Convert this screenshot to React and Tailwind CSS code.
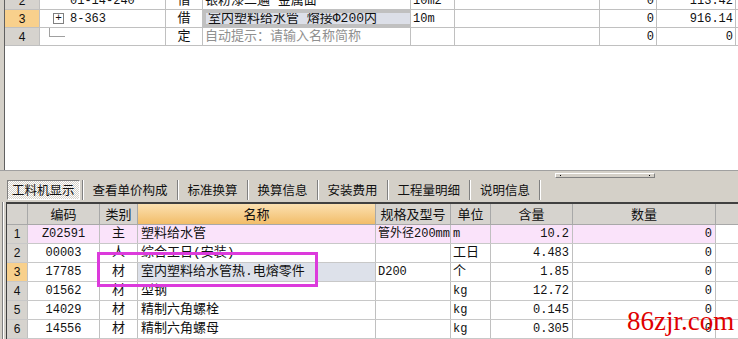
import React from "react";

const cjk = "font-['Liberation_Mono','Noto_Sans_CJK_SC',monospace]";

function Cell({ w, className = "", children }) {
    return (
        <div
            className={`shrink-0 h-full flex items-center border-r border-[#c0c0c0] overflow-hidden whitespace-nowrap ${className}`}
            style={{ width: w }}
        >
            {children}
        </div>
    );
}

const topRows = [
    { n: "2", code: "01-14-240", t: "借", name: "银粉漆二遍 金属面", unit: "10m2", a: "0", b: "113.42" },
    { n: "3", code: "8-363", t: "借", name: "室内塑料给水管 熔接Φ200内", unit: "10m", a: "0", b: "916.14", sel: true },
    { n: "4", code: "", t: "定", name: "自动提示：请输入名称简称", unit: "", a: "0", b: "0", hint: true },
];

const items = [
    { n: "1", code: "Z02591", t: "主", name: "塑料给水管", spec: "管外径200mm", unit: "m", qty: "10.2", amt: "0", pink: true },
    { n: "2", code: "00003", t: "人", name: "综合工日(安装)", spec: "", unit: "工日", qty: "4.483", amt: "0" },
    { n: "3", code: "17785", t: "材", name: "室内塑料给水管热.电熔零件", spec: "D200", unit: "个", qty: "1.85", amt: "0", sel: true },
    { n: "4", code: "01562", t: "材", name: "型钢", spec: "", unit: "kg", qty: "12.72", amt: "0" },
    { n: "5", code: "14029", t: "材", name: "精制六角螺栓", spec: "", unit: "kg", qty: "0.145", amt: "0" },
    { n: "6", code: "14556", t: "材", name: "精制六角螺母", spec: "", unit: "kg", qty: "0.305", amt: "0" },
];

const tabs = ["工料机显示", "查看单价构成", "标准换算", "换算信息", "安装费用", "工程量明细", "说明信息"];

function TopGrid() {
    return (
        <div className="h-[171px] flex bg-white border-b border-[#a0a0a0]">
            <div className="w-[4px] shrink-0 bg-[#d4d0c8]" />
            <div className="w-[1px] shrink-0 bg-[#606060]" />
            <div className="flex-1 overflow-hidden">
                <div className="-mt-[8px]">
                    {topRows.map((r) => (
                        <div key={r.n} className={`flex h-[18px] border-b border-[#c0c0c0] text-[12px] text-[#111] ${cjk}`}>
                            <Cell w={35} className={`justify-center font-['Liberation_Sans',sans-serif] ${r.sel ? "bg-[#f8d08c]" : "bg-[#d6d3ce]"}`}>{r.n}</Cell>
                            <Cell w={126} className="relative pl-[30px]">
                                {r.sel && (
                                    <span className="absolute left-[13px] top-[3px] w-[11px] h-[11px] border border-[#808080] flex items-center justify-center text-[11px] leading-none bg-white">+</span>
                                )}
                                {r.hint && (
                                    <span className="absolute left-[9px] top-0 w-[16px] h-[9px] border-l border-b border-[#a0a0a0]" />
                                )}
                                {r.code}
                            </Cell>
                            <Cell w={37} className="justify-center text-[13px]">{r.t}</Cell>
                            <Cell w={208} className={`pl-[2px] text-[13px] ${r.sel ? "bg-[#dcdfe8] border-[3px] border-[#7a7a7a]" : ""} ${r.hint ? "text-[#909090]" : ""}`}>{r.name}</Cell>
                            <Cell w={44} className="pl-[2px]">{r.unit}</Cell>
                            <Cell w={145} />
                            <Cell w={57} className="justify-end pr-[2px]">{r.a}</Cell>
                            <Cell w={79} className="justify-end pr-[2px]">{r.b}</Cell>
                        </div>
                    ))}
                </div>
            </div>
        </div>
    );
}

function Tabs() {
    return (
        <div className="relative h-[31px] flex items-end pl-[7px] pb-[2px]">
            {/* splitter grip */}
            <div className="absolute left-[555px] top-[2px] w-[100px] h-[5px] border border-[#808080] border-t-white border-l-white bg-[#d4d0c8] flex items-center justify-between px-[4px]">
                <span className="w-[1px] h-[1px] bg-black" />
                <span className="w-[1px] h-[1px] bg-black" />
            </div>
            {tabs.map((t, i) => (
                <div key={t} className="flex items-center">
                    <div
                        className={`h-[20px] flex items-center text-[12.5px] text-[#111] font-['Noto_Sans_CJK_SC',sans-serif] ${
                            i === 0
                                ? "px-[4px] border border-[#808080] border-r-white border-b-white bg-[repeating-conic-gradient(#ffffff_0_25%,#d4d0c8_0_50%)] bg-[length:2px_2px]"
                                : "px-[9px]"
                        }`}
                    >
                        {t}
                    </div>
                    <div className={`h-[20px] w-[2px] border-l border-[#808080] border-r border-r-white ${i === 0 ? "ml-[2px]" : ""}`} />
                </div>
            ))}
        </div>
    );
}

function HeaderCell({ w, children, className = "" }) {
    return (
        <div
            className={`shrink-0 h-full flex items-center justify-center border-r border-[#a8a8a8] text-[13px] text-[#111] font-['Noto_Sans_CJK_SC',sans-serif] ${className}`}
            style={{ width: w }}
        >
            {children}
        </div>
    );
}

function BottomGrid() {
    return (
        <div className="relative flex">
            <div className="w-[7px] shrink-0 flex">
                <div className="w-[2px] bg-[#d4d0c8]" />
                <div className="w-[1px] bg-[#808080]" />
                <div className="w-[1px] bg-white" />
                <div className="w-[2px] bg-[#d4d0c8]" />
                <div className="w-[1px] bg-[#404040]" />
            </div>
            <div className="flex-1 border-t-2 border-[#404040]">
                <div className="flex h-[21px] bg-[#d6d3ce] border-b border-[#a8a8a8]">
                    <HeaderCell w={21} />
                    <HeaderCell w={72}>编码</HeaderCell>
                    <HeaderCell w={38}>类别</HeaderCell>
                    <HeaderCell w={238} className="bg-gradient-to-b from-[#fbe0b0] to-[#f2bd68]">名称</HeaderCell>
                    <HeaderCell w={75}>规格及型号</HeaderCell>
                    <HeaderCell w={40}>单位</HeaderCell>
                    <HeaderCell w={82}>含量</HeaderCell>
                    <HeaderCell w={143}>数量</HeaderCell>
                    <div className="flex-1" />
                </div>
                {items.map((r) => (
                    <div key={r.n} className={`flex h-[19px] border-b border-[#c8c8c8] text-[12px] text-[#111] ${cjk} ${r.pink ? "bg-[#fae3fa]" : "bg-white"}`}>
                        <Cell w={21} className={`justify-center font-['Liberation_Sans',sans-serif] ${r.sel ? "bg-[#f8d08c]" : "bg-[#d6d3ce]"}`}>{r.n}</Cell>
                        <Cell w={72} className="justify-center">{r.code}</Cell>
                        <Cell w={38} className="justify-center text-[13px]">{r.t}</Cell>
                        <Cell w={238} className={`pl-[3px] text-[13px] ${r.sel ? "bg-[#dde1ea]" : ""}`}>{r.name}</Cell>
                        <Cell w={75} className="pl-[2px]">{r.spec}</Cell>
                        <Cell w={40} className={`pl-[2px] ${r.unit === "工日" || r.unit === "个" ? "text-[13px]" : ""}`}>{r.unit}</Cell>
                        <Cell w={82} className="justify-end pr-[3px]">{r.qty}</Cell>
                        <Cell w={143} className="justify-end pr-[3px]">{r.amt}</Cell>
                        <div className="flex-1 bg-white" />
                    </div>
                ))}
            </div>
            {/* annotation box */}
            <div className="absolute left-[97px] top-[50px] w-[221px] h-[35px] border-[3px] border-[#dc3adc] pointer-events-none" />
        </div>
    );
}

export default function App() {
    return (
        <div className="relative w-[738px] h-[339px] overflow-hidden bg-[#d4d0c8]">
            <TopGrid />
            <Tabs />
            <BottomGrid />
            <div className="absolute left-[627px] top-[308px] text-[27px] leading-none text-[#e00000] font-['Liberation_Serif',serif]">
                86zjr.com
            </div>
        </div>
    );
}
